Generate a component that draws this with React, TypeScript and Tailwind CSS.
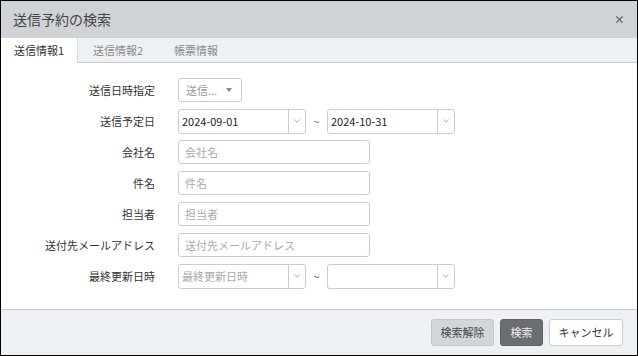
import React from "react";
import { ChevronDown, X } from "lucide-react";

const font = { fontFamily: '"Noto Sans CJK JP", "Noto Sans", sans-serif' };

function Row({ label, children }: { label: string; children: React.ReactNode }) {
    return (
        <div className="flex items-center h-[24px]">
            <div className="w-[154px] shrink-0 text-right text-[11px] text-[#333]">{label}</div>
            <div className="ml-[23px] flex items-center">{children}</div>
        </div>
    );
}

function TextInput({ placeholder }: { placeholder: string }) {
    return (
        <div className="w-[192px] h-[24px] border border-[#ccc] rounded-[3px] bg-white px-[6px] flex items-center text-[11px] text-[#aaa]">
            {placeholder}
        </div>
    );
}

function DateBox({ value, placeholder }: { value?: string; placeholder?: string }) {
    return (
        <div className="w-[128px] h-[25px] border border-[#ccc] rounded-[3px] bg-white flex items-stretch text-[11px]">
            <div className={"flex-1 flex items-center px-[3px] " + (value ? "text-[#222]" : "text-[#aaa]")}>
                {value ?? placeholder}
            </div>
            <div className="w-[17px] border-l border-[#ccc] flex items-center justify-center">
                <ChevronDown className="w-[10px] h-[10px] text-[#777]" strokeWidth={1.5} />
            </div>
        </div>
    );
}

export default function App() {
    return (
        <div className="w-[638px] h-[356px] border border-black bg-white flex flex-col overflow-hidden" style={font}>
            {/* Header */}
            <div className="h-[37px] shrink-0 bg-[#d0d3d6] flex items-center justify-between pl-[12px] pr-[12px]">
                <span className="text-[14px] text-[#444]">送信予約の検索</span>
                <X className="w-[11px] h-[11px] text-[#666]" strokeWidth={2.5} />
            </div>

            {/* Tabs */}
            <div className="h-[25px] shrink-0 bg-[#eef1f4] border-b border-[#c8cbce] flex text-[11px]">
                <div className="w-[77px] bg-white border-r border-[#d8dbde] flex items-center justify-center text-[#333] -mb-px">
                    送信情報1
                </div>
                <div className="w-[80px] flex items-center justify-center text-[#888]">送信情報2</div>
                <div className="w-[76px] flex items-center justify-center text-[#888]">帳票情報</div>
            </div>

            {/* Form */}
            <div className="flex-1 flex flex-col gap-[7px] pt-[15px]">
                <Row label="送信日時指定">
                    <div className="w-[64px] h-[24px] border border-[#ccc] rounded-[3px] bg-white flex items-center justify-between pl-[7px] pr-[9px] text-[11px] text-[#999]">
                        <span>送信...</span>
                        <span className="w-0 h-0 border-l-[3px] border-r-[3px] border-t-[4px] border-l-transparent border-r-transparent border-t-[#888]" />
                    </div>
                </Row>
                <Row label="送信予定日">
                    <DateBox value="2024-09-01" />
                    <span className="w-[21px] text-center text-[11px] text-[#7a6a2a]">~</span>
                    <DateBox value="2024-10-31" />
                </Row>
                <Row label="会社名">
                    <TextInput placeholder="会社名" />
                </Row>
                <Row label="件名">
                    <TextInput placeholder="件名" />
                </Row>
                <Row label="担当者">
                    <TextInput placeholder="担当者" />
                </Row>
                <Row label="送付先メールアドレス">
                    <TextInput placeholder="送付先メールアドレス" />
                </Row>
                <Row label="最終更新日時">
                    <DateBox placeholder="最終更新日時" />
                    <span className="w-[21px] text-center text-[11px] text-[#555]">~</span>
                    <DateBox />
                </Row>
            </div>

            {/* Footer */}
            <div className="h-[46px] shrink-0 bg-[#eef1f4] border-t border-[#c8cbce] flex items-center justify-end gap-[6px] pr-[14px] text-[11px]">
                <div className="w-[63px] h-[27px] flex items-center justify-center rounded-[3px] bg-[#d3d6d9] border border-[#c4c7ca] text-[#444]">
                    検索解除
                </div>
                <div className="w-[43px] h-[27px] flex items-center justify-center rounded-[3px] bg-[#6b6e71] border border-[#5e6164] text-[#eee]">
                    検索
                </div>
                <div className="w-[74px] h-[27px] flex items-center justify-center rounded-[3px] bg-white border border-[#ccc] text-[#333]">
                    キャンセル
                </div>
            </div>
        </div>
    );
}
